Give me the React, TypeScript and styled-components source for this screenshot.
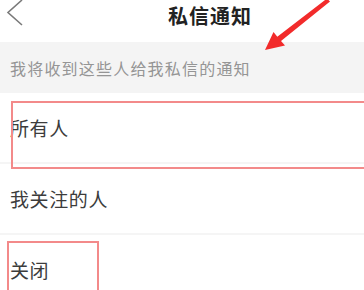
import * as React from 'react';
import styled, { createGlobalStyle } from 'styled-components';

const GlobalStyle = createGlobalStyle`
    html, body {
        margin: 0;
        padding: 0;
        background: #ffffff;
    }
    body {
        font-family: "Noto Sans CJK SC", "Noto Sans", sans-serif;
    }
`;

const Page = styled.div`
    position: relative;
    width: 364px;
    height: 290px;
    overflow: hidden;
    background: #ffffff;
`;

const Header = styled.div`
    height: 42px;
    display: flex;
    align-items: center;
    justify-content: center;
    position: relative;
    padding-left: 56px;
`;

const BackButton = styled.div`
    position: absolute;
    left: 0;
    top: 0;
    width: 30px;
    height: 30px;
`;

const Title = styled.h1`
    margin: 0;
    margin-top: -12px;
    font-size: 20px;
    font-weight: 700;
    color: #222222;
    letter-spacing: 1px;
`;

const Notice = styled.div`
    height: 51px;
    display: flex;
    align-items: center;
    padding-left: 10px;
    background: #f4f4f4;
    color: #959595;
    font-size: 16px;
    letter-spacing: 1.2px;
`;

const OptionList = styled.div`
    display: flex;
    flex-direction: column;
`;

const Option = styled.div`
    height: 69px;
    display: flex;
    align-items: center;
    padding-left: 10px;
    border-bottom: 2px solid #f5f5f5;
    color: #3c3c3c;
    font-size: 19px;
    letter-spacing: 0.6px;
`;

type MarkProps = {
    $left: number;
    $top: number;
    $width: number;
    $height: number;
};

const Mark = styled.div<MarkProps>`
    position: absolute;
    left: ${p => p.$left}px;
    top: ${p => p.$top}px;
    width: ${p => p.$width}px;
    height: ${p => p.$height}px;
    border: 2px solid #f38a8a;
    box-sizing: border-box;
    pointer-events: none;
`;

const Arrow = styled.svg`
    position: absolute;
    left: 0;
    top: 0;
    pointer-events: none;
`;

const options = ['所有人', '我关注的人', '关闭'];

const App = () => {
    return (
        <Page>
            <GlobalStyle />
            <Header>
                <BackButton>
                    <svg width="30" height="30" viewBox="0 0 30 30">
                        <polyline
                            points="22,0 8,12.5 22,25"
                            fill="none"
                            stroke="#7a7a7a"
                            strokeWidth="1.6"
                        />
                    </svg>
                </BackButton>
                <Title>私信通知</Title>
            </Header>
            <Notice>我将收到这些人给我私信的通知</Notice>
            <OptionList>
                {options.map(label => (
                    <Option key={label}>{label}</Option>
                ))}
            </OptionList>
            <Mark $left={11} $top={101} $width={360} $height={68} />
            <Mark $left={7} $top={241} $width={92} $height={60} />
            <Arrow width="364" height="60" viewBox="0 0 364 60">
                <polygon
                    points="265,50 273.5,32 277.3,36.8 327,-1.5 330,1.5 281,41 285,45.5"
                    fill="#f22b2b"
                />
            </Arrow>
        </Page>
    );
};

export default App;
